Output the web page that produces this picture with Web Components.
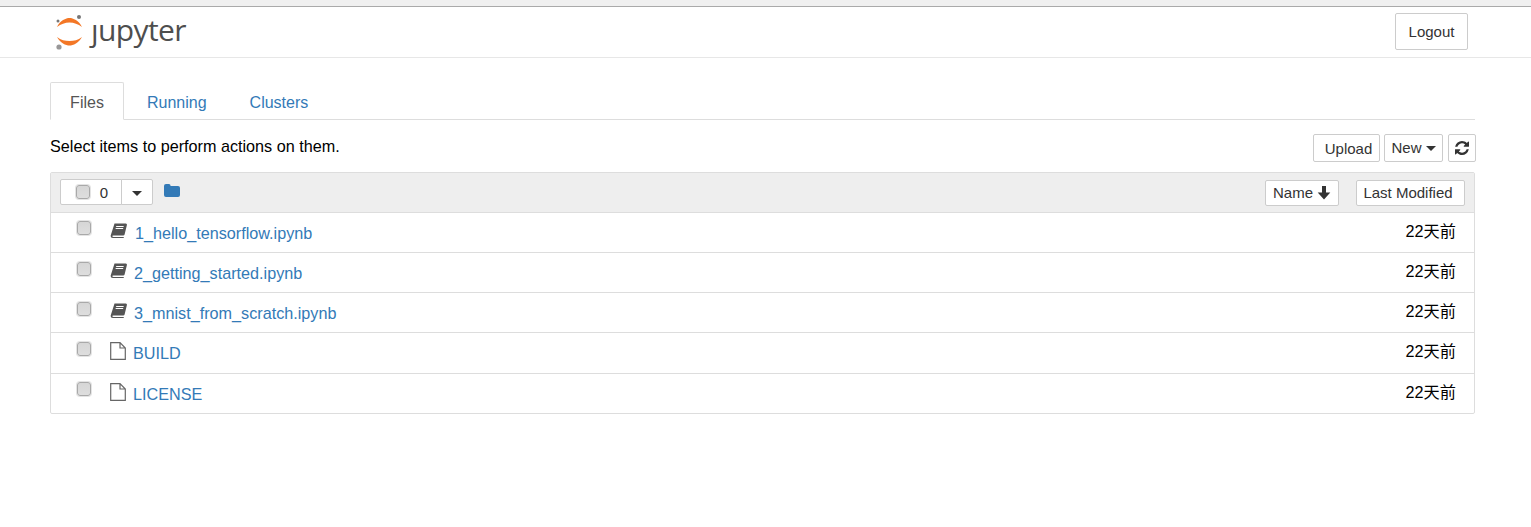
<!DOCTYPE html>
<html>
<head>
<meta charset="utf-8">
<style>
  html, body { margin: 0; padding: 0; background: #fff; }
  body { font-family: "Liberation Sans", "Noto Sans CJK SC", sans-serif; font-size: 16.2px; color: #333; }
</style>
</head>
<body>
<top-strip></top-strip>
<site-header></site-header>
<tree-page>
  <file-row kind="notebook" name="1_hello_tensorflow.ipynb" nudge></file-row>
  <file-row kind="notebook" name="2_getting_started.ipynb" low></file-row>
  <file-row kind="notebook" name="3_mnist_from_scratch.ipynb" low></file-row>
  <file-row kind="file" name="BUILD" tall low></file-row>
  <file-row kind="file" name="LICENSE"></file-row>
</tree-page>

<script>
const BTN = `
  .btn {
    box-sizing: border-box;
    display: inline-flex;
    align-items: center;
    justify-content: center;
    background: #fff;
    border: 1px solid #ccc;
    border-radius: 2px;
    color: #333;
    white-space: nowrap;
  }
`;

class TopStrip extends HTMLElement {
  constructor() {
    super();
    this.attachShadow({ mode: 'open' }).innerHTML = `
      <style>
        :host { display: block; height: 6px; background: #f0f0f0; border-bottom: 1px solid #aaa; }
      </style>`;
  }
}
customElements.define('top-strip', TopStrip);

class SiteHeader extends HTMLElement {
  constructor() {
    super();
    this.attachShadow({ mode: 'open' }).innerHTML = `
      <style>
        ${BTN}
        :host {
          display: flex;
          justify-content: space-between;
          height: 50px;
          box-sizing: content-box;
          border-bottom: 1px solid #e7e7e7;
          padding: 0 63px 0 55px;
        }
        .logo { display: flex; align-items: flex-start; }
        svg { display: block; margin-top: 7px; }
        .word {
          font-family: "Open Sans", sans-serif;
          font-size: 30px;
          line-height: 40px;
          letter-spacing: -0.6px;
          color: #4e4e4e;
          margin-left: 3px;
          margin-top: 3px;
        }
        .btn { width: 73px; height: 37px; margin-top: 6px; font-size: 15px; }
      </style>
      <div class="logo">
        <svg width="33" height="38" viewBox="0 0 33 38">
          <path d="M2 13C5 6.500 11 4 14.500 4S24 6.500 27 13C23 10 19 8.500 14.500 8.500S6 10 2 13Z" fill="#f37726"/>
          <path d="M2 23C5 29 11 31.500 14.500 31.500S24 29 27 23C23 26 19 27 14.500 27S6 26 2 23Z" fill="#f37726"/>
          <circle cx="24" cy="3" r="2" fill="#767677"/>
          <circle cx="3" cy="7" r="1.500" fill="#767677"/>
          <circle cx="4" cy="33" r="2.600" fill="#989798"/>
        </svg>
        <span class="word">ȷupyter</span>
      </div>
      <div class="btn">Logout</div>`;
  }
}
customElements.define('site-header', SiteHeader);

class TreePage extends HTMLElement {
  constructor() {
    super();
    this.attachShadow({ mode: 'open' }).innerHTML = `
      <style>
        ${BTN}
        :host { display: block; padding: 24px 56px 0 50px; }
        .tabs {
          display: flex;
          height: 37px;
          border-bottom: 1px solid #ddd;
        }
        .tab { box-sizing: border-box; height: 38px; line-height: 41px; font-size: 16px; color: #337ab7; }
        .tab.on {
          width: 74px;
          text-align: center;
          color: #555;
          background: #fff;
          border: 1px solid #ddd;
          border-bottom-color: #fff;
          border-radius: 2px 2px 0 0;
          line-height: 40px;
        }
        .running { margin-left: 23px; }
        .clusters { margin-left: 43px; }
        .actions {
          display: flex;
          justify-content: space-between;
          height: 52px;
        }
        .hint { color: #000; font-size: 16.2px; margin-top: 16px; line-height: 20px; }
        .tools { display: flex; gap: 4px; margin: 14px -1px 0 0; }
        .tools .btn { height: 28px; font-size: 15px; }
        .upload { width: 67px; padding: 0 0 0 4px; }
        .new { width: 59px; gap: 4px; padding: 0 0 2px 0; }
        .refresh { width: 28px; margin-left: 1px; }
        .caret { width: 0; height: 0; border: 5px solid transparent; border-top-color: #333; border-bottom: 0; }
        .new .caret { margin-top: 3px; }
        .panel {
          border: 1px solid #ddd;
          border-radius: 2px;
        }
        .bar {
          display: flex;
          align-items: flex-start;
          height: 39px;
          background: #eee;
          border-bottom: 1px solid #ddd;
          padding-left: 9px;
          padding-right: 9px;
        }
        .picker { display: flex; height: 26px; margin-top: 6px; width: 93px; }
        .picker .btn:first-child { width: 62px; gap: 10px; padding-left: 2px; border-radius: 2px 0 0 2px; font-size: 15px; }
        .picker .btn:last-child { width: 32px; margin-left: -1px; border-radius: 0 2px 2px 0; }
        .picker .caret { border-width: 5.500px; border-bottom: 0; margin-top: 2px; }
        .box {
          box-sizing: border-box;
          width: 14px; height: 14px;
          border: 1px solid #a9a9a9;
          border-radius: 3px;
          background: linear-gradient(#d6d6d6, #dedede);
          box-shadow: 0 0 0 1px #e4e4e4;
        }
        .folder { margin: 11px 0 0 11px; display: block; }
        .spacer { flex: 1; }
        .name-btn, .mod-btn { height: 26px; margin-top: 7px; font-size: 15px; padding-bottom: 2px; }
        .name-btn { width: 74px; gap: 4px; }
        .name-btn svg { margin-top: 2px; }
        .mod-btn { width: 109px; margin-left: 17px; padding-right: 5px; }
      </style>
      <div class="tabs">
        <div class="tab on">Files</div>
        <div class="tab running">Running</div>
        <div class="tab clusters">Clusters</div>
      </div>
      <div class="actions">
        <div class="hint">Select items to perform actions on them.</div>
        <div class="tools">
          <div class="btn upload">Upload</div>
          <div class="btn new">New <span class="caret"></span></div>
          <div class="btn refresh">
            <svg width="14" height="14" viewBox="0 0 1536 1536"><path fill="#333" d="M1511 928q0 5-1 7-64 268-268 434.500T764 1536q-146 0-282.500-55T238 1324l-129 129q-19 19-45 19t-45-19-19-45V960q0-26 19-45t45-19h448q26 0 45 19t19 45-19 45L420 1142q71 66 161 102t187 36q134 0 250-65t186-179q11-17 53-117 8-23 30-23h192q13 0 22.500 9.500T1511 928zm25-800v448q0 26-19 45t-45 19h-448q-26 0-45-19t-19-45 19-45l138-138Q969 256 768 256q-134 0-250 65T332 500q-11 17-53 117-8 23-30 23H50q-13 0-22.500-9.500T18 608v-7q65-268 270-434.500T768 0q146 0 284 55.500T1297 212l130-129q19-19 45-19t45 19 19 45z"/></svg>
          </div>
        </div>
      </div>
      <div class="panel">
        <div class="bar">
          <div class="picker">
            <div class="btn"><span class="box"></span>0</div>
            <div class="btn"><span class="caret"></span></div>
          </div>
          <svg class="folder" width="16" height="13" viewBox="0 0 16 13"><path fill="#337ab7" d="M0 2Q0 0 2 0H5Q6.500 0 6.500 1.500V2H14Q16 2 16 4V11Q16 13 14 13H2Q0 13 0 11Z"/></svg>
          <span class="spacer"></span>
          <div class="btn name-btn">Name
            <svg width="14" height="14" viewBox="0 0 14 14"><path fill="#333" d="M5 0H9V6.500H13.300L7 13.500.7 6.500H5Z"/></svg>
          </div>
          <div class="btn mod-btn">Last Modified</div>
        </div>
        <slot></slot>
      </div>`;
  }
}
customElements.define('tree-page', TreePage);

const ICONS = {
  notebook: `<svg width="18" height="15" viewBox="0 0 18 15"><path fill="#555" d="M4.500.500H15.800Q17.300.500 16.900 2L14.600 11.500Q14.300 12.500 13.200 12.500H3.500Q2 12.500 2.300 13.300 2.600 14 3.500 14H14L13.500 15H3Q.500 15 .700 12.500Z"/><path fill="#fff" d="M6.300 3H13.800L13.500 4H6ZM5.800 5H13.300L13 6H5.500Z"/></svg>`,
  file: `<svg width="16" height="18" viewBox="0 0 16 18"><path fill="none" stroke="#666" stroke-width="1.200" d="M.700.700H10L15.300 6V17.300H.700ZM10 .700V6H15.300"/></svg>`
};

class FileRow extends HTMLElement {
  constructor() {
    super();
    const kind = this.getAttribute('kind');
    const notebook = kind === 'notebook';
    this.attachShadow({ mode: 'open' }).innerHTML = `
      <style>
        :host { display: block; height: 39px; border-bottom: 1px solid #ddd; }
        :host([tall]) { height: 40px; }
        :host(:last-child) { border-bottom: 0; }
        .row { display: flex; align-items: flex-start; padding: 0 18px 0 26px; }
        .box {
          box-sizing: border-box;
          width: 14px; height: 14px;
          margin-top: 8px;
          border: 1px solid #a9a9a9;
          border-radius: 3px;
          background: linear-gradient(#d6d6d6, #dedede);
          box-shadow: 0 0 0 1px #e4e4e4;
        }
        :host([low]) .box { margin-top: 9px; }
        .icon { margin-left: 19px; margin-top: ${notebook ? 10 : 9}px; width: ${notebook ? 24 : 23}px; }
        svg { display: block; }
        a { color: #337ab7; font-size: 16.2px; line-height: 20px; margin-top: 10px; text-decoration: none; }
        :host([nudge]) a { margin-left: 1px; }
        .spacer { flex: 1; }
        .when { color: #000; font-size: 16.2px; line-height: 20px; margin-top: 8px; }
      </style>
      <div class="row">
        <span class="box"></span>
        <span class="icon">${ICONS[kind]}</span>
        <a>${this.getAttribute('name')}</a>
        <span class="spacer"></span>
        <span class="when">22天前</span>
      </div>`;
  }
}
customElements.define('file-row', FileRow);
</script>
</body>
</html>
